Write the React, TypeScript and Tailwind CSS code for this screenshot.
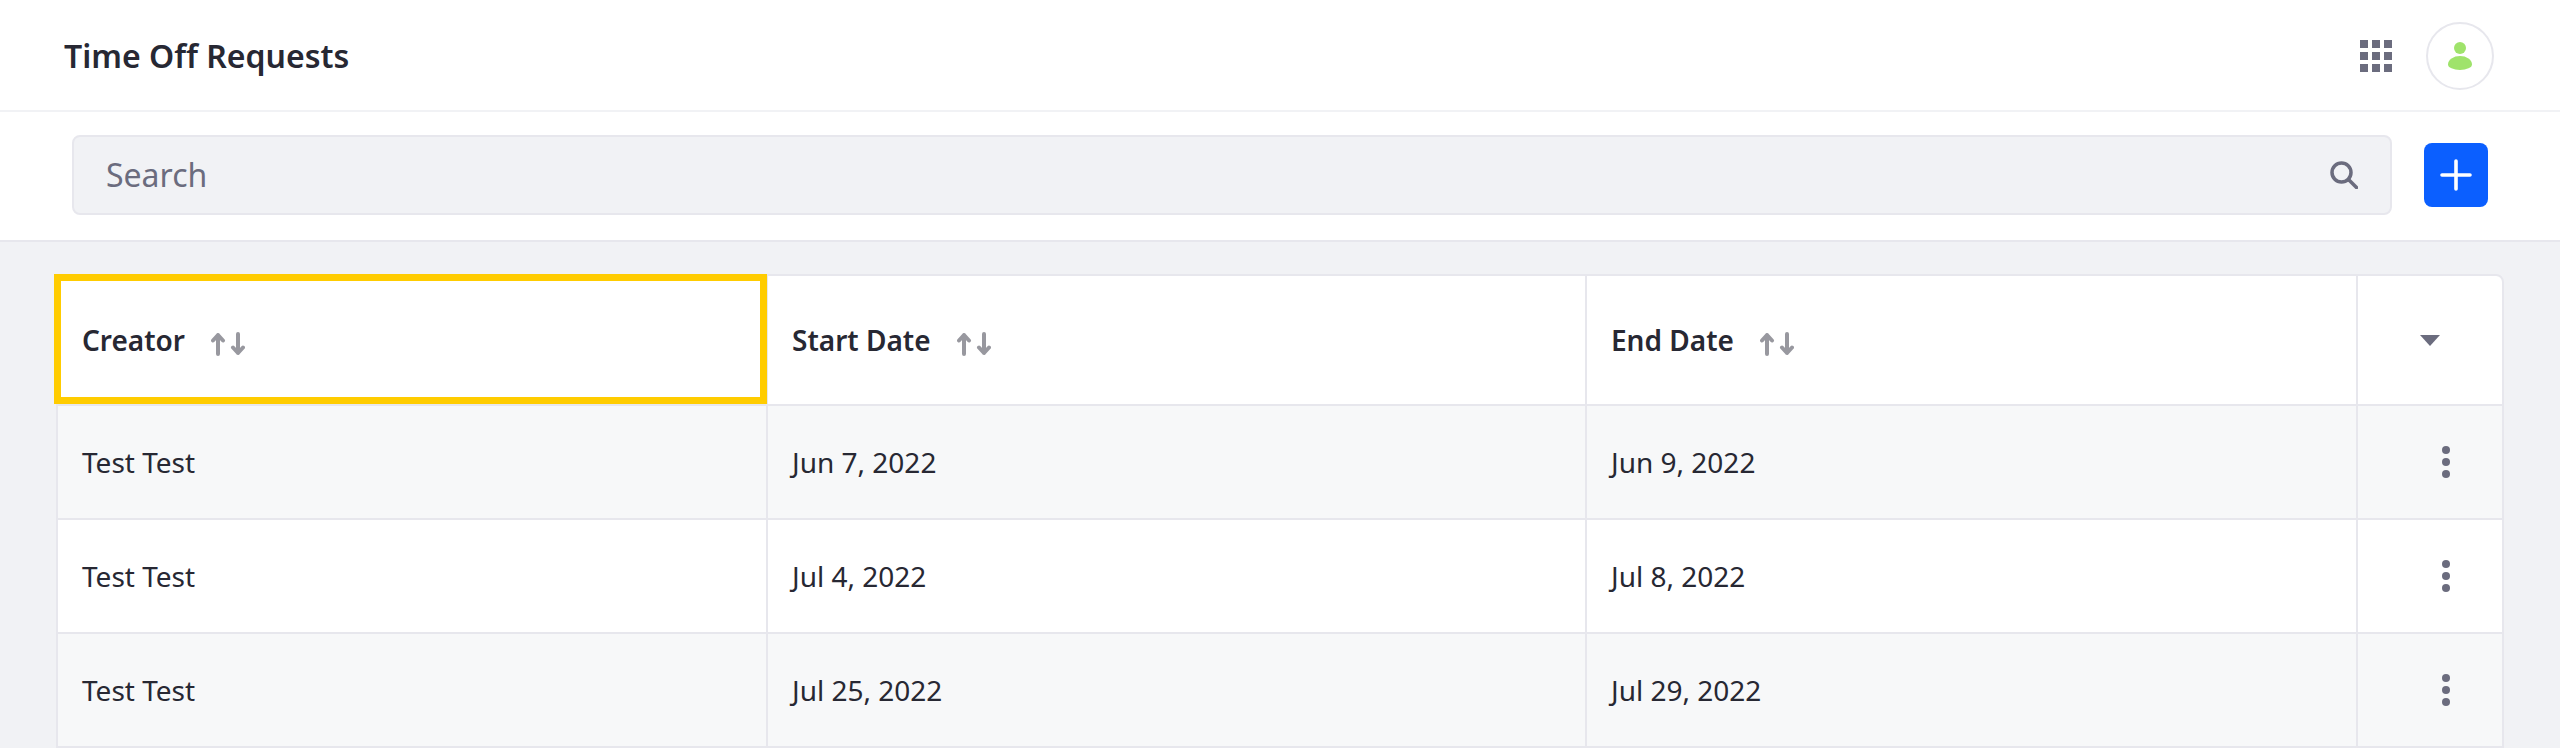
const rows = [
  { creator: "Test Test", start: "Jun 7, 2022", end: "Jun 9, 2022" },
  { creator: "Test Test", start: "Jul 4, 2022", end: "Jul 8, 2022" },
  { creator: "Test Test", start: "Jul 25, 2022", end: "Jul 29, 2022" },
];

const SortIcon = () => (
  <svg width="34" height="24" viewBox="0 0 34 24" fill="none" className="ml-[26px] mt-[8px]">
    <path d="M7 22V3M2 8.5L7 3l5 5.5" stroke="#98989f" strokeWidth="4" strokeLinecap="round" strokeLinejoin="round" />
    <path d="M27 2v19M22 15.5l5 5.5 5-5.5" stroke="#98989f" strokeWidth="4" strokeLinecap="round" strokeLinejoin="round" />
  </svg>
);

const GridIcon = () => (
  <div className="grid grid-cols-3 gap-1 w-8">
    {Array.from({ length: 9 }).map((_, i) => (
      <div key={i} className="w-2 h-2 bg-[#6b6c7e]" />
    ))}
  </div>
);

const Kebab = () => (
  <div className="flex flex-col gap-1 items-center">
    <div className="w-2 h-2 rounded-full bg-[#6b6c7e]" />
    <div className="w-2 h-2 rounded-full bg-[#6b6c7e]" />
    <div className="w-2 h-2 rounded-full bg-[#6b6c7e]" />
  </div>
);

export default function App() {
  return (
    <div className="h-[748px] overflow-hidden bg-[#f1f2f5] text-[#272833] font-['Noto_Sans',sans-serif]">
      <header className="h-[112px] bg-white border-b-2 border-[#f1f2f5] flex items-center justify-between pl-16 pr-[66px] pt-[2px]">
        <h1 className="text-[32px] font-semibold leading-none">Time Off Requests</h1>
        <div className="flex items-center gap-[34px]">
          <GridIcon />
          <div className="w-[68px] h-[68px] rounded-full border-2 border-[#e7e7ed] flex flex-col items-center justify-center">
            <div className="w-3 h-3 rounded-full bg-[#9fe36b]" />
            <div className="w-6 h-[14px] mt-[2px] rounded-[50%/60%_60%_40%_40%] bg-[#9fe36b]" />
          </div>
        </div>
      </header>

      <div className="h-[130px] bg-white border-b-2 border-[#e7e7ed] flex items-center pl-[72px] pr-[60px] pb-[2px]">
        <div className="w-[2320px] h-[80px] rounded-lg bg-[#f1f2f5] border-2 border-[#e7e7ed] flex items-center justify-between pl-[32px] pr-[32px]">
          <span className="text-[32px] text-[#6b6c7e]">Search</span>
          <svg width="28" height="28" viewBox="0 0 28 28" fill="none">
            <circle cx="11.5" cy="11.5" r="9.5" stroke="#6b6c7e" strokeWidth="3.5" />
            <path d="M19 19l7.5 7.5" stroke="#6b6c7e" strokeWidth="3.5" strokeLinecap="round" />
          </svg>
        </div>
        <button className="ml-8 w-16 h-16 rounded-lg bg-[#0b5fff] flex items-center justify-center">
          <svg width="32" height="32" viewBox="0 0 32 32" fill="none">
            <path d="M16 2v28M2 16h28" stroke="white" strokeWidth="3.6" strokeLinecap="round" />
          </svg>
        </button>
      </div>

      <div className="mt-[32px] ml-14 w-[2448px] rounded-t-lg border-2 border-[#e7e7ed] bg-white">
        <div className="flex h-[130px] border-b-2 border-[#e7e7ed] text-[28px] font-semibold">
          <div className="relative w-[710px] border-r-2 border-[#e7e7ed] flex items-center pl-6">
            <span>Creator</span>
            <SortIcon />
            <div className="absolute -left-[4px] -top-[2px] w-[713px] h-[130px] border-[7px] border-[#ffcc00]" />
          </div>
          <div className="w-[819px] border-r-2 border-[#e7e7ed] flex items-center pl-6">
            <span>Start Date</span>
            <SortIcon />
          </div>
          <div className="w-[771px] border-r-2 border-[#e7e7ed] flex items-center pl-6">
            <span>End Date</span>
            <SortIcon />
          </div>
          <div className="flex-1 flex items-center justify-center">
            <div className="w-0 h-0 border-x-[10px] border-x-transparent border-t-[11px] border-t-[#6b6c7e]" />
          </div>
        </div>
        {rows.map((row, i) => (
          <div
            key={i}
            className={`flex h-[114px] text-[28px] border-b-2 border-[#e7e7ed] ${i % 2 === 0 ? "bg-[#f7f8f9]" : "bg-white"}`}
          >
            <div className="w-[710px] border-r-2 border-[#e7e7ed] flex items-center pl-6">{row.creator}</div>
            <div className="w-[819px] border-r-2 border-[#e7e7ed] flex items-center pl-6">{row.start}</div>
            <div className="w-[771px] border-r-2 border-[#e7e7ed] flex items-center pl-6">{row.end}</div>
            <div className="flex-1 flex items-center justify-center pl-[32px]">
              <Kebab />
            </div>
          </div>
        ))}
      </div>
    </div>
  );
}
